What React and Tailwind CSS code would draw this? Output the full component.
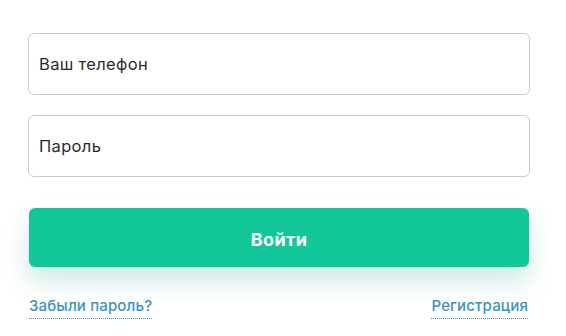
import React, { useState } from "react";

const App = () => {
  const [phone, setPhone] = useState("");
  const [password, setPassword] = useState("");

  return (
    <div className="w-[566px] h-[336px] bg-white font-['Inter',sans-serif] overflow-hidden">
      <form className="pl-[28px] pr-[36px] pt-[33px] flex flex-col" onSubmit={(e) => e.preventDefault()}>
        <input
          type="text"
          placeholder="Ваш телефон"
          value={phone}
          onChange={(e) => setPhone(e.target.value)}
          className="h-[62px] w-full rounded-[6px] border border-[#c9cbd3] px-[10px] text-[16.5px] tracking-[0.02em] text-[#2b2b2b] placeholder:text-[#2b2b2b] outline-none"
        />
        <input
          type="password"
          placeholder="Пароль"
          value={password}
          onChange={(e) => setPassword(e.target.value)}
          className="mt-[20px] h-[62px] w-full rounded-[6px] border border-[#c9cbd3] px-[10px] text-[16.5px] tracking-[0.02em] text-[#2b2b2b] placeholder:text-[#2b2b2b] outline-none"
        />
        <div className="mx-[1px] mt-[31px]">
          <button
            type="submit"
            className="h-[59px] w-full rounded-[6px] bg-[#12c89a] pt-[3px] text-[18px] tracking-[0.02em] font-bold text-white shadow-[0_14px_24px_rgba(16,160,130,0.22)]"
          >
            Войти
          </button>
        </div>
        <div className="mt-[29px] flex justify-between pl-[1px] pr-[2px] text-[15px] tracking-[0.01em] font-medium text-[#3a93c3]">
          <a href="#" className="border-b border-dotted border-[#3a93c3] leading-[20px] pb-[2px]">Забыли пароль?</a>
          <a href="#" className="border-b border-dotted border-[#3a93c3] leading-[20px] pb-[2px]">Регистрация</a>
        </div>
      </form>
    </div>
  );
};

export default App;
